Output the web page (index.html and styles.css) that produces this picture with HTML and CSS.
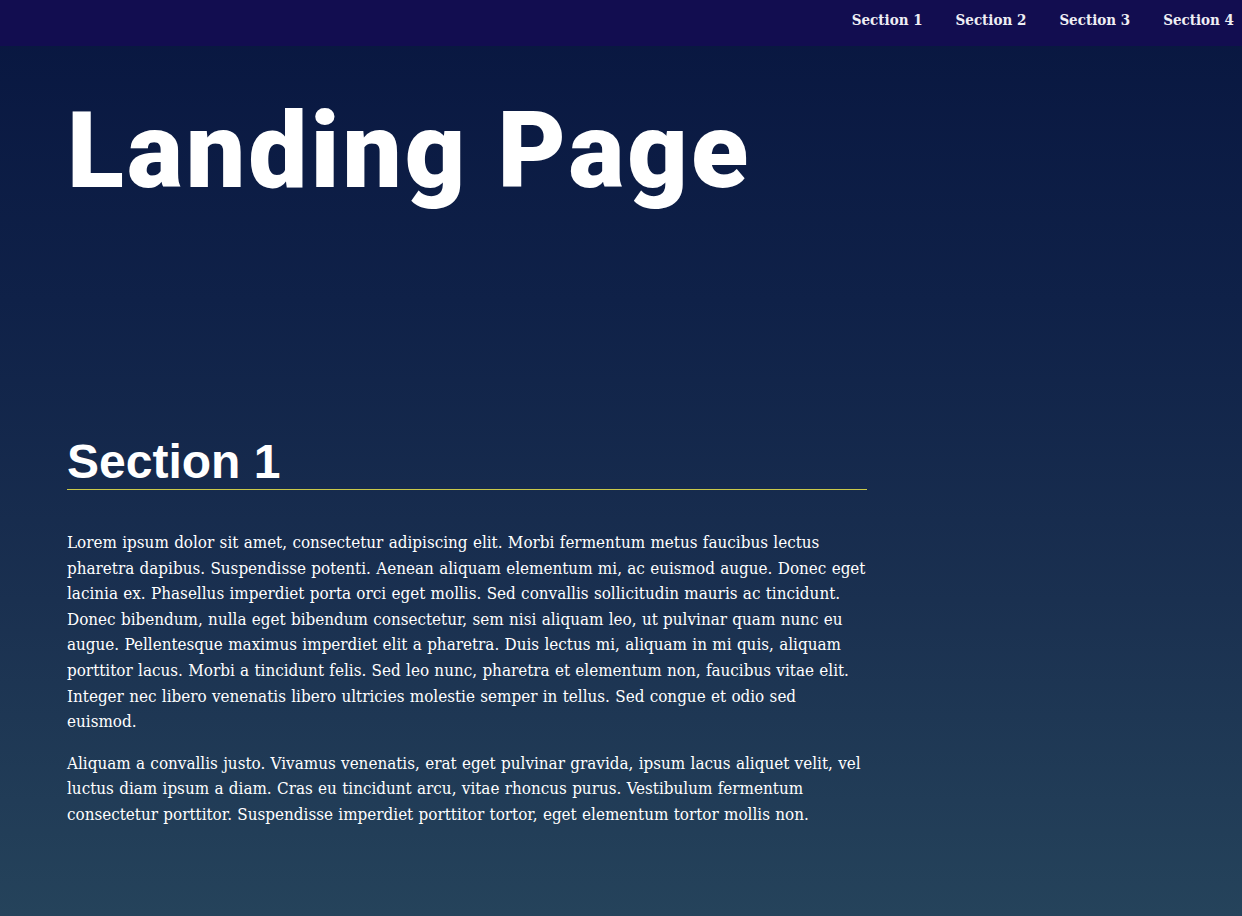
FILE: index.html
```html
<!DOCTYPE html>
<html lang="en">
<head>
<meta charset="utf-8">
<title>Landing Page</title>
<link rel="stylesheet" href="styles.css">
</head>
<body>
<header class="page-header">
  <nav class="navbar">
    <ul class="navbar-list">
      <li><a class="menu-link" href="#section1">Section 1</a></li>
      <li><a class="menu-link" href="#section2">Section 2</a></li>
      <li><a class="menu-link" href="#section3">Section 3</a></li>
      <li><a class="menu-link" href="#section4">Section 4</a></li>
    </ul>
  </nav>
</header>
<main class="main">
  <header class="hero">
    <h1 class="hero-title">Landing Page</h1>
  </header>
  <section id="section1" class="section">
    <div class="container">
      <h2 class="section-title">Section 1</h2>
      <p class="text">Lorem ipsum dolor sit amet, consectetur adipiscing elit. Morbi fermentum metus faucibus lectus pharetra dapibus. Suspendisse potenti. Aenean aliquam elementum mi, ac euismod augue. Donec eget lacinia ex. Phasellus imperdiet porta orci eget mollis. Sed convallis sollicitudin mauris ac tincidunt. Donec bibendum, nulla eget bibendum consectetur, sem nisi aliquam leo, ut pulvinar quam nunc eu augue. Pellentesque maximus imperdiet elit a pharetra. Duis lectus mi, aliquam in mi quis, aliquam porttitor lacus. Morbi a tincidunt felis. Sed leo nunc, pharetra et elementum non, faucibus vitae elit. Integer nec libero venenatis libero ultricies molestie semper in tellus. Sed congue et odio sed euismod.</p>
      <p class="text">Aliquam a convallis justo. Vivamus venenatis, erat eget pulvinar gravida, ipsum lacus aliquet velit, vel luctus diam ipsum a diam. Cras eu tincidunt arcu, vitae rhoncus purus. Vestibulum fermentum consectetur porttitor. Suspendisse imperdiet porttitor tortor, eget elementum tortor mollis non.</p>
    </div>
  </section>
</main>
</body>
</html>
```

FILE: styles.css
```css
html, body {
  margin: 0;
  padding: 0;
}

body {
  min-height: 916px;
  background: linear-gradient(180deg, #081640 0px, #0f2148 300px, #1a3050 600px, #25435b 916px);
  font-family: "DejaVu Serif", "Liberation Serif", serif;
  font-stretch: condensed;
  color: #fff;
}

.page-header {
  background: #120d50;
  height: 46px;
}

.navbar {
  height: 100%;
}

.navbar-list {
  margin: 0;
  padding: 0 8px 0 0;
  list-style: none;
  height: 100%;
  display: flex;
  justify-content: flex-end;
  align-items: center;
  gap: 33px;
}

.menu-link {
  display: block;
  font-size: 15px;
  font-weight: bold;
  color: #eeeef4;
  text-decoration: none;
  line-height: 20px;
  padding-bottom: 6px;
}

.main {
  margin: 0;
}

.hero {
  padding: 53px 0 0 67px;
  margin-bottom: 230px;
}

.hero-title {
  margin: 0;
  font-family: Roboto, "Liberation Sans", sans-serif;
  font-stretch: normal;
  font-weight: 900;
  font-size: 105px;
  line-height: 1;
  letter-spacing: 3.1px;
}

.container {
  width: 800px;
  padding-left: 67px;
}

.section-title {
  margin: 0;
  font-family: "Liberation Sans", Arial, sans-serif;
  font-stretch: normal;
  font-weight: bold;
  font-size: 48px;
  line-height: 55px;
  border-bottom: 1px solid #c9c94a;
}

.text {
  margin: 40px 0 16px;
  font-size: 16.9px;
  line-height: 25.6px;
  word-spacing: 0.5px;
}

.text + .text {
  margin-top: 16px;
}
```
